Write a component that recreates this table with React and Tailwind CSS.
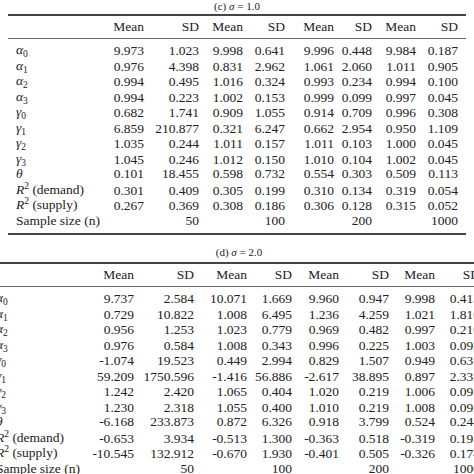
import React from "react";

const topRows = [
  ["a0", "9.973 1.023 9.998 0.641 9.996 0.448 9.984 0.187"],
  ["a1", "0.976 4.398 0.831 2.962 1.061 2.060 1.011 0.905"],
  ["a2", "0.994 0.495 1.016 0.324 0.993 0.234 0.994 0.100"],
  ["a3", "0.994 0.223 1.002 0.153 0.999 0.099 0.997 0.045"],
  ["g0", "0.682 1.741 0.909 1.055 0.914 0.709 0.996 0.308"],
  ["g1", "6.859 210.877 0.321 6.247 0.662 2.954 0.950 1.109"],
  ["g2", "1.035 0.244 1.011 0.157 1.011 0.103 1.000 0.045"],
  ["g3", "1.045 0.246 1.012 0.150 1.010 0.104 1.002 0.045"],
  ["th", "0.101 18.455 0.598 0.732 0.554 0.303 0.509 0.113"],
  ["rd", "0.301 0.409 0.305 0.199 0.310 0.134 0.319 0.054"],
  ["rs", "0.267 0.369 0.308 0.186 0.306 0.128 0.315 0.052"],
];

const bottomRows = [
  ["a0", "9.737 2.584 10.071 1.669 9.960 0.947 9.998 0.413"],
  ["a1", "0.729 10.822 1.008 6.495 1.236 4.259 1.021 1.810"],
  ["a2", "0.956 1.253 1.023 0.779 0.969 0.482 0.997 0.210"],
  ["a3", "0.976 0.584 1.008 0.343 0.996 0.225 1.003 0.092"],
  ["g0", "-1.074 19.523 0.449 2.994 0.829 1.507 0.949 0.631"],
  ["g1", "59.209 1750.596 -1.416 56.886 -2.617 38.895 0.897 2.332"],
  ["g2", "1.242 2.420 1.065 0.404 1.020 0.219 1.006 0.093"],
  ["g3", "1.230 2.318 1.055 0.400 1.010 0.219 1.008 0.092"],
  ["th", "-6.168 233.873 0.872 6.326 0.918 3.799 0.524 0.244"],
  ["rd", "-0.653 3.934 -0.513 1.300 -0.363 0.518 -0.319 0.191"],
  ["rs", "-10.545 132.912 -0.670 1.930 -0.401 0.505 -0.326 0.174"],
];

function Label({ k }) {
  const greek = { a: "α", g: "γ" };
  if (k[0] === "a" || k[0] === "g") {
    return (
      <span>
        <i>{greek[k[0]]}</i>
        <span className="text-[9.5px] relative top-[3px]">{k[1]}</span>
      </span>
    );
  }
  if (k === "th") return <i>θ</i>;
  if (k === "rd" || k === "rs") {
    return (
      <span>
        <i>R</i>
        <span className="text-[9.5px] relative top-[-5px]">2</span>
        {k === "rd" ? " (demand)" : " (supply)"}
      </span>
    );
  }
  return null;
}

function Table({ rows, cols, title, titleGap }) {
  const gridStyle = { gridTemplateColumns: cols };
  return (
    <div>
      <div className="h-[12px] flex items-center justify-center text-[11px] leading-none">
        {title}
      </div>
      <div className={"h-[2px] bg-[#444] " + (titleGap ? "mt-[4px]" : "mt-[2px]")} />
      <div className="grid h-[22px] items-center" style={gridStyle}>
        <div />
        {["Mean", "SD", "Mean", "SD", "Mean", "SD", "Mean", "SD"].map((h, i) => (
          <div key={i} className="text-right">{h}</div>
        ))}
      </div>
      <div className="h-[1px] bg-[#666]" />
      <div className="pt-[3px]">
        {rows.map(([k, vals]) => (
          <div key={k} className="grid h-[15.5px] items-center" style={gridStyle}>
            <div className="pl-[8px] whitespace-nowrap"><Label k={k} /></div>
            {vals.split(" ").map((v, i) => (
              <div key={i} className="text-right whitespace-nowrap">{v}</div>
            ))}
          </div>
        ))}
        <div className="grid h-[15.5px] items-center" style={gridStyle}>
          <div className="pl-[8px] whitespace-nowrap">Sample size (n)</div>
          {["", "50", "", "100", "", "200", "", "1000"].map((v, i) => (
            <div key={i} className="text-right">{v}</div>
          ))}
        </div>
      </div>
      <div className="h-[2px] bg-[#444] mt-[5px]" />
    </div>
  );
}

export default function App() {
  return (
    <div
      className="w-[474px] h-[474px] bg-white overflow-hidden text-[#222] text-[13.5px] leading-[15.5px]"
      style={{ fontFamily: '"Liberation Serif", "Times New Roman", serif' }}
    >
      <div className="pl-[8px] w-[466px]">
        <Table
          rows={topRows}
          cols="92px 44px 55px 44px 42px 49px 38px 44px 42px 8px"
          title={<span>(c) <i>σ</i> = 1.0</span>}
        />
      </div>
      <div className="mt-[11px] ml-[-12px] w-[510px]">
        <Table
          rows={bottomRows}
          cols="100px 46px 60px 53px 45px 47px 50px 46px 45px 18px"
          title={<span className="ml-[-8px]">(d) <i>σ</i> = 2.0</span>}
          titleGap
        />
      </div>
    </div>
  );
}
